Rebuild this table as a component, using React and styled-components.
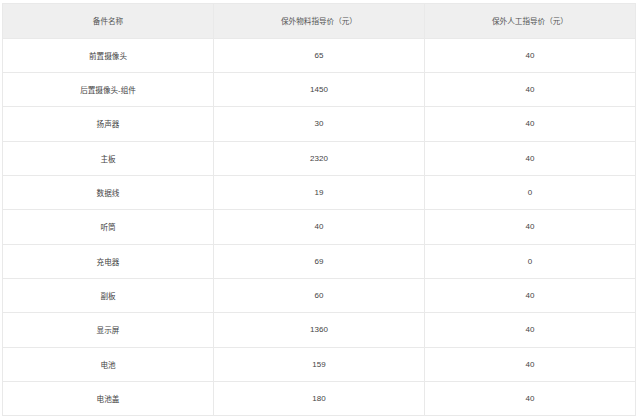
import React from 'react'
import styled, { createGlobalStyle } from 'styled-components';

const GlobalStyle = createGlobalStyle`
  html, body {
    margin: 0;
    padding: 0;
    background: #ffffff;
  }
  body {
    font-family: "Liberation Sans", "Noto Sans CJK SC", sans-serif;
  }
`;

const Page = styled.div`
  width: 640px;
  height: 420px;
  padding: 3px 4px 0 2px;
  box-sizing: border-box;
  background: #fff;
`;

const Table = styled.div`
  display: grid;
  grid-template-columns: repeat(3, 1fr);
  border-top: 1px solid #e9e9e9;
  border-left: 1px solid #e9e9e9;
`;

const Cell = styled.div`
  height: ${p => (p.$head ? '34.5px' : '34.35px')};
  display: flex;
  align-items: center;
  justify-content: center;
  box-sizing: border-box;
  border-right: 1px solid #e9e9e9;
  border-bottom: 1px solid #e9e9e9;
  background: ${p => (p.$head ? '#efefef' : '#fff')};
  color: ${p => (p.$head ? '#555' : '#444')};
  font-size: ${p => (p.$num ? '8px' : '7.6px')};
  font-family: "Liberation Sans", "Noto Sans CJK SC", sans-serif;
  white-space: nowrap;
`;

const head = ['备件名称', '保外物料指导价（元）', '保外人工指导价（元）'];

const rows = [
  ['前置摄像头', '65', '40'],
  ['后置摄像头-组件', '1450', '40'],
  ['扬声器', '30', '40'],
  ['主板', '2320', '40'],
  ['数据线', '19', '0'],
  ['听筒', '40', '40'],
  ['充电器', '69', '0'],
  ['副板', '60', '40'],
  ['显示屏', '1360', '40'],
  ['电池', '159', '40'],
  ['电池盖', '180', '40'],
];

const App = () => (
  <Page>
    <GlobalStyle />
    <Table>
      {head.map(h => (
        <Cell $head key={h}>{h}</Cell>
      ))}
      {rows.map(r => (
        <React.Fragment key={r[0]}>
          <Cell>{r[0]}</Cell>
          <Cell $num>{r[1]}</Cell>
          <Cell $num>{r[2]}</Cell>
        </React.Fragment>
      ))}
    </Table>
  </Page>
);

export default App;
